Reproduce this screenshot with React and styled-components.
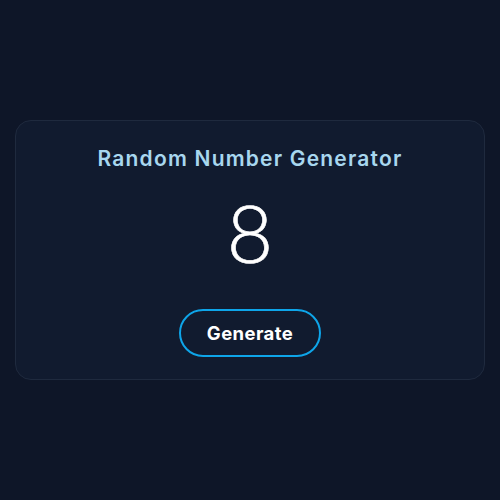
import React, { useState } from "react";
import styled, { createGlobalStyle } from "styled-components";

const GlobalStyle = createGlobalStyle`
	html, body {
		margin: 0;
		padding: 0;
		background: #0e1628;
	}
	* {
		box-sizing: border-box;
	}
`;

const App = () => {
	const [value, setValue] = useState(8);

	return (
		<Page>
			<GlobalStyle />
			<Card>
				<Title>Random Number Generator</Title>
				<Number>{value}</Number>
				<Button onClick={() => setValue(Math.floor(Math.random() * 10) + 1)}>
					Generate
				</Button>
			</Card>
		</Page>
	);
};

export default App;

const Page = styled.main`
	display: flex;
	align-items: center;
	justify-content: center;
	width: 500px;
	height: 500px;
	padding: 0 15px;
	font-family: Inter, "Noto Sans", sans-serif;
`;

const Card = styled.section`
	display: flex;
	flex-direction: column;
	align-items: center;
	width: 100%;
	height: 260px;
	padding: 25px 24px 0;
	background: #111b2f;
	border: 1px solid #1f2a3e;
	border-radius: 16px;
`;

const Title = styled.h1`
	margin: 0;
	font-size: 21px;
	font-weight: 600;
	color: #a8d7ef;
	letter-spacing: 1.2px;
`;

const Number = styled.div`
	margin-top: 21px;
	font-family: Lato, sans-serif;
	font-size: 80px;
	font-weight: 300;
	line-height: 1;
	color: #ffffff;
	-webkit-text-stroke: 0.6px #ffffff;
`;

const Button = styled.button`
	margin-top: 37px;
	width: 142px;
	height: 48px;
	background: transparent;
	border: 2px solid #0ea5e9;
	border-radius: 999px;
	color: #ffffff;
	font-family: inherit;
	font-size: 18.5px;
	font-weight: 700;
	letter-spacing: 0.4px;
	cursor: pointer;
`;
